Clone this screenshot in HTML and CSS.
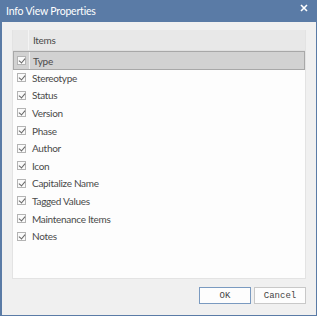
FILE: index.html
```html
<!DOCTYPE html>
<html lang="en">
<head>
<meta charset="UTF-8">
<title>Info View Properties</title>
<link rel="stylesheet" href="styles.css">
</head>
<body>

<div class="window">
  <div class="titlebar">
    <span class="title">Info View Properties</span>
    <svg class="close" width="8" height="8" viewBox="0 0 8 8"><path d="M1 1L7 7M7 1L1 7" stroke="#fff" stroke-width="1.6"/></svg>
  </div>

  <div class="content">
    <div class="list">
      <div class="head">
        <div class="head-check"></div>
        <div class="head-label">Items</div>
      </div>
      <div class="row selected"><span class="box"></span><span class="label">Type</span></div>
      <div class="row"><span class="box"></span><span class="label">Stereotype</span></div>
      <div class="row"><span class="box"></span><span class="label">Status</span></div>
      <div class="row"><span class="box"></span><span class="label">Version</span></div>
      <div class="row"><span class="box"></span><span class="label">Phase</span></div>
      <div class="row"><span class="box"></span><span class="label">Author</span></div>
      <div class="row"><span class="box"></span><span class="label">Icon</span></div>
      <div class="row"><span class="box"></span><span class="label">Capitalize Name</span></div>
      <div class="row"><span class="box"></span><span class="label">Tagged Values</span></div>
      <div class="row"><span class="box"></span><span class="label">Maintenance Items</span></div>
      <div class="row"><span class="box"></span><span class="label">Notes</span></div>
    </div>

    <div class="buttons">
      <button class="btn default">OK</button>
      <button class="btn">Cancel</button>
    </div>
  </div>
</div>

</body>
</html>
```

FILE: styles.css
```css
* {
  box-sizing: border-box;
}

body {
  margin: 0;
  font-family: 'Lato', 'Open Sans', sans-serif;
  background-color: #f0f0f0;
}

/* Dialog frame */
.window {
  width: 317px;
  height: 316px;
  border: 1px solid #5a7ba6;
  border-top: none;
  border-left-width: 2px;
  background-color: #f0f0f0;
  display: flex;
  flex-direction: column;
}

.titlebar {
  height: 22px;
  background-color: #5a7ba6;
  display: flex;
  align-items: center;
  justify-content: space-between;
  padding: 0 9px 0 6px;
  margin-left: -2px;
  margin-right: -1px;
}

.title {
  color: white;
  font-size: 10.5px;
  letter-spacing: -0.2px;
}

.close {
  margin-top: -6px;
}

.content {
  flex: 1;
  padding: 8px 10px 0 10px;
  display: flex;
  flex-direction: column;
}

/* Item list */
.list {
  height: 249px;
  background-color: #fdfdfd;
  border: 1px solid #e3e3e3;
  border-top: none;
}

.head {
  display: flex;
  height: 21px;
  background-color: #e8e8e8;
  border-bottom: 1px solid #e0e0e0;
}

.head-check {
  width: 16px;
  border-right: 1px solid #f4f4f4;
}

.head-label {
  padding-left: 4px;
  font-size: 10px;
  line-height: 21px;
  color: #4a4a4a;
  letter-spacing: -0.3px;
}

.row {
  display: flex;
  align-items: center;
  height: 17.6px;
  font-size: 10px;
  color: #4a4a4a;
  letter-spacing: -0.3px;
}

.row.selected {
  background-color: #d2d2d2;
  border: 1px solid #a8a8a8;
  height: 19px;
  margin-bottom: -1px;
}

.row.selected .box {
  margin-left: 3px;
}

.row.selected .label {
  border-left: 1px solid #f0f0f0;
  height: 100%;
  display: flex;
  align-items: center;
  padding-left: 3px;
  margin-left: 3px;
}

.box {
  width: 9px;
  height: 9px;
  margin-left: 4px;
  border: 1px solid #b4b4b4;
  background-color: #fafafa;
  position: relative;
}

.box::after {
  content: "";
  position: absolute;
  left: 2px;
  top: 0px;
  width: 3px;
  height: 5px;
  border-right: 1.3px solid #666;
  border-bottom: 1.3px solid #666;
  transform: rotate(40deg);
}

.label {
  margin-left: 6px;
}

/* Bottom buttons */
.buttons {
  display: flex;
  justify-content: flex-end;
  gap: 3px;
  margin-top: 8px;
}

.btn {
  width: 52px;
  height: 17px;
  padding: 0;
  font-family: 'Liberation Mono', monospace;
  font-size: 9px;
  color: #444;
  background-color: #fdfdfd;
  border: 1px solid #c8c8c8;
}

.btn.default {
  border-color: #7a9ac0;
}
```
